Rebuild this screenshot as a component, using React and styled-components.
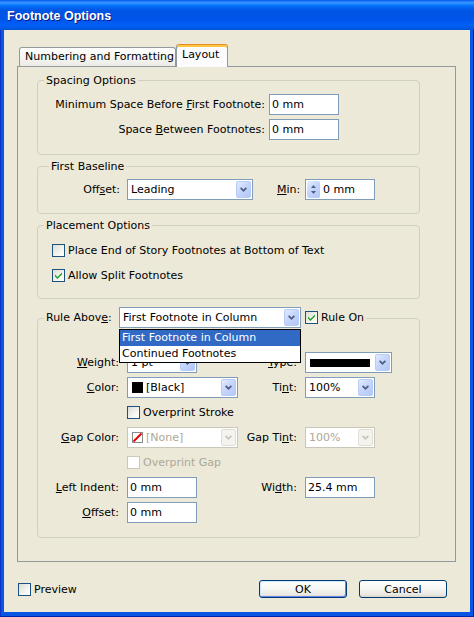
import React from "react";
import styled, { createGlobalStyle } from "styled-components";

const GlobalStyle = createGlobalStyle`
  html, body {
    margin: 0;
    padding: 0;
    background: #ECE9D8;
  }
  body {
    font-family: "DejaVu Sans", "Liberation Sans", sans-serif;
    font-size: 11px;
    line-height: 13px;
    color: #000;
  }
  * {
    box-sizing: border-box;
  }
`;

const Window = styled.div`
  width: 474px;
  height: 617px;
  display: flex;
  flex-direction: column;
  overflow: hidden;
  background: #0A52E0;
`;

const TitleBar = styled.div`
  flex: none;
  height: 30px;
  display: flex;
  align-items: center;
  padding: 1px 0 0 7px;
  background: linear-gradient(
    to bottom,
    #0058ee 0%,
    #3593ff 8%,
    #288eff 12%,
    #127dff 16%,
    #036ffc 20%,
    #0262ee 26%,
    #0057e5 34%,
    #0054e3 44%,
    #0055eb 66%,
    #005bf5 76%,
    #0260f5 86%,
    #0052d6 100%
  );
  color: #fff;
  font: bold 12.5px "Liberation Sans", Arial, sans-serif;
  text-shadow: 1px 1px 0 #0a1883;
`;

const Frame = styled.div`
  flex: 1;
  display: flex;
  padding: 0 3px 4px 3px;
  background: #0B55E4;
  border-left: 1px solid #0836C8;
  border-right: 1px solid #0026A8;
  border-bottom: 1px solid #0026A8;
`;

const Body = styled.div`
  flex: 1;
  background: #ECE9D8;
  padding: 14px 0 0 13px;
  display: flex;
  flex-direction: column;
`;

const TabStrip = styled.div`
  display: flex;
  align-items: flex-end;
  height: 23px;
  padding-left: 2px;
  margin-bottom: -1px;
  position: relative;
  z-index: 1;
`;

const Tab = styled.div`
  width: ${(p) => p.$w}px;
  height: ${(p) => (p.$active ? 23 : 19)}px;
  margin-bottom: ${(p) => (p.$active ? 0 : 1)}px;
  padding: ${(p) => (p.$active ? "3px 0 0 5px" : "2px 0 0 5px")};
  border: 1px solid #919B9C;
  border-bottom: none;
  border-top-color: ${(p) => (p.$active ? "#E68B2C" : "#919B9C")};
  border-radius: 3px 3px 0 0;
  background: ${(p) =>
    p.$active ? "#FCFCFE" : "linear-gradient(#FFFFFF, #F4F4F0 60%, #ECEBE6)"};
  box-shadow: ${(p) => (p.$active ? "inset 0 2px 0 #FFC73C" : "none")};
  white-space: nowrap;
  overflow: hidden;
`;

const Panel = styled.div`
  width: 439px;
  height: 496px;
  border: 1px solid #919B9C;
  background: #ECE9D8;
  padding: 13px 0 0 19px;
  display: flex;
  flex-direction: column;
`;

const Group = styled.div`
  width: 383px;
  height: ${(p) => p.$h}px;
  margin-top: ${(p) => p.$mt || 0}px;
  border: 1px solid #D0D0BF;
  border-radius: 4px;
  display: flex;
  flex-direction: column;
`;

const GroupTitle = styled.div`
  align-self: flex-start;
  display: flex;
  align-items: center;
  height: ${(p) => p.$h || 13}px;
  margin: -${(p) => p.$lift || 7}px 0 0 ${(p) => p.$indent || 6}px;
  padding: 0 2px;
  background: #ECE9D8;
  white-space: nowrap;
`;

const FormGrid = styled.div`
  display: grid;
  grid-template-columns: ${(p) => p.$cols};
  grid-auto-rows: 21px;
  row-gap: 4px;
  margin-top: ${(p) => p.$mt}px;
  align-items: center;
`;

const FieldLabel = styled.span`
  text-align: right;
  padding-right: ${(p) => p.$gap ?? 8}px;
  white-space: nowrap;
  color: ${(p) => (p.$disabled ? "#ACA899" : "inherit")};
`;

const Row = styled.div`
  display: flex;
  align-items: center;
  height: 21px;
  margin-top: ${(p) => p.$mt || 0}px;
`;

const CheckList = styled.div`
  display: flex;
  flex-direction: column;
  gap: 4px;
  margin-top: ${(p) => p.$mt}px;
  padding-left: 14px;
`;

const TextInput = styled.input`
  width: ${(p) => p.$w || 70}px;
  height: 21px;
  margin: 0;
  border: 1px solid #7F9DB9;
  border-radius: 0;
  background: #fff;
  padding: 0 0 0 2px;
  font: inherit;
  color: #000;
  outline: none;
`;

const SelectWrap = styled.div`
  position: relative;
  width: ${(p) => p.$w}px;
  flex: none;
`;

const SelectBox = styled.div`
  width: 100%;
  height: 21px;
  border: 1px solid ${(p) => (p.$disabled ? "#C9C7BA" : "#7F9DB9")};
  background: #fff;
  display: flex;
  align-items: center;
  padding-left: 3px;
  color: ${(p) => (p.$disabled ? "#ACA899" : "#000")};
`;

const SelectValue = styled.span`
  flex: 1;
  min-width: 0;
  display: flex;
  align-items: center;
  gap: 3px;
  white-space: nowrap;
  overflow: hidden;
`;

const DropButton = styled.span`
  flex: none;
  width: 15px;
  height: 17px;
  margin: 0 1px;
  border-radius: 2px;
  border: 1px solid ${(p) => (p.$disabled ? "#E2E0D6" : "#B9CCF6")};
  background: ${(p) =>
    p.$disabled
      ? "#F4F3EE"
      : "linear-gradient(135deg, #E4ECFE 0%, #C6D6FB 45%, #B2C7F7 100%)"};
  display: flex;
  align-items: center;
  justify-content: center;
`;

const DropList = styled.div`
  position: absolute;
  top: calc(100% + 1px);
  left: 0;
  width: 100%;
  border: 1px solid #000;
  background: #fff;
  z-index: 5;
`;

const DropItem = styled.div`
  height: 16px;
  line-height: 16px;
  padding-left: 2px;
  white-space: nowrap;
  background: ${(p) => (p.$selected ? "#316AC5" : "#fff")};
  color: ${(p) => (p.$selected ? "#fff" : "#000")};
`;

const SpinBox = styled.div`
  width: 70px;
  height: 21px;
  border: 1px solid #7F9DB9;
  background: #fff;
  display: flex;
  align-items: center;
`;

const SpinButtons = styled.span`
  width: 13px;
  height: 17px;
  margin: 0 3px 0 1px;
  border-radius: 2px;
  background: linear-gradient(135deg, #E4ECFE 0%, #C6D6FB 45%, #B2C7F7 100%);
  display: flex;
  flex-direction: column;
  align-items: center;
  justify-content: center;
  gap: 3px;
`;

const CheckRow = styled.label`
  display: flex;
  align-items: center;
  gap: 3px;
  height: 21px;
  white-space: nowrap;
  color: ${(p) => (p.$disabled ? "#ACA899" : "#000")};
  grid-column: ${(p) => p.$col || "auto"};
`;

const Box = styled.span`
  flex: none;
  width: 13px;
  height: 13px;
  border: 1px solid ${(p) => (p.$disabled ? "#CAC8BB" : "#1C5180")};
  background: ${(p) =>
    p.$disabled ? "#fff" : "linear-gradient(135deg, #DCDCD7 0%, #F4F4F0 60%, #FFFFFF 100%)"};
  display: flex;
  align-items: center;
  justify-content: center;
`;

const LineSwatch = styled.span`
  width: 60px;
  height: 8px;
  background: #000;
  margin-left: 1px;
`;

const ColorSwatch = styled.span`
  flex: none;
  width: 11px;
  height: 11px;
  background: #000;
  margin-left: 1px;
`;

const LegendLabel = styled.span`
  width: 73px;
  flex: none;
`;

const Footer = styled.div`
  width: 440px;
  height: 18px;
  margin-top: 18px;
  padding-left: 1px;
  display: flex;
  align-items: center;
`;

const ButtonRow = styled.div`
  margin-left: auto;
  margin-right: 10px;
  display: flex;
  gap: 12px;
`;

const Button = styled.button`
  width: 88px;
  height: 18px;
  margin: 0;
  padding: 0;
  border: 1px solid #003C74;
  border-radius: 3px;
  background: linear-gradient(#FFFFFF 0%, #F6F6F2 50%, #EAE8E1 85%, #D8D2C6 100%);
  box-shadow: ${(p) =>
    p.$default ? "inset 1px 1px 0 #CEE7FF, inset -1px -1px 0 #6982EE" : "none"};
  font: inherit;
  color: #000;
`;

const Chevron = ({ color = "#4D6185" }) => (
  <svg width="7" height="5" viewBox="0 0 7 5">
    <path d="M0.6 0.8 L3.5 3.7 L6.4 0.8" fill="none" stroke={color} strokeWidth="1.7" />
  </svg>
);

const SmallArrow = ({ up }) => (
  <svg width="5" height="3" viewBox="0 0 5 3">
    <path d={up ? "M0 3 L2.5 0 L5 3 Z" : "M0 0 L2.5 3 L5 0 Z"} fill="#4D6185" />
  </svg>
);

const CheckMark = () => (
  <svg width="7" height="7" viewBox="0 0 7 7">
    <path d="M0 2.6 L2.4 5 L7 0.4 L7 2.6 L2.4 7 L0 4.6 Z" fill="#21A121" />
  </svg>
);

const NoneSwatch = () => (
  <svg width="11" height="11" viewBox="0 0 11 11" style={{ flex: "none", marginLeft: 1 }}>
    <rect x="0.5" y="0.5" width="10" height="10" fill="#fff" stroke="#8A8A8A" />
    <path d="M1.5 9.5 L9.5 1.5" stroke="#E80000" strokeWidth="2" />
  </svg>
);

const Select = ({ w, disabled, children, list }) => (
  <SelectWrap $w={w}>
    <SelectBox $disabled={disabled}>
      <SelectValue>{children}</SelectValue>
      <DropButton $disabled={disabled}>
        <Chevron color={disabled ? "#C9C7BA" : "#4D6185"} />
      </DropButton>
    </SelectBox>
    {list && (
      <DropList>
        {list.map((item, i) => (
          <DropItem key={item} $selected={i === 0}>
            {item}
          </DropItem>
        ))}
      </DropList>
    )}
  </SelectWrap>
);

const Check = ({ checked, disabled, col, children }) => (
  <CheckRow $disabled={disabled} $col={col}>
    <Box $disabled={disabled}>{checked && <CheckMark />}</Box>
    {children}
  </CheckRow>
);

export default function App() {
  return (
    <Window>
      <GlobalStyle />
      <TitleBar>Footnote Options</TitleBar>
      <Frame>
        <Body>
          <TabStrip>
            <Tab $w={157}>Numbering and Formatting</Tab>
            <Tab $w={52} $active>
              Layout
            </Tab>
          </TabStrip>
          <Panel>
            <Group $h={75}>
              <GroupTitle>Spacing Options</GroupTitle>
              <FormGrid $cols="231px 70px" $mt={7}>
                <FieldLabel $gap={4}>
                  Minimum Space Before <u>F</u>irst Footnote:
                </FieldLabel>
                <TextInput readOnly value="0 mm" />
                <FieldLabel $gap={4}>
                  Space <u>B</u>etween Footnotes:
                </FieldLabel>
                <TextInput readOnly value="0 mm" />
              </FormGrid>
            </Group>

            <Group $h={48} $mt={11}>
              <GroupTitle $indent={11}>First Baseline</GroupTitle>
              <Row $mt={6}>
                <FieldLabel $gap={7} style={{ width: 89 }}>
                  Off<u>s</u>et:
                </FieldLabel>
                <Select w={126}>Leading</Select>
                <FieldLabel $gap={0} style={{ width: 28, marginLeft: 24, textAlign: "left" }}>
                  <u>M</u>in:
                </FieldLabel>
                <SpinBox>
                  <SpinButtons>
                    <SmallArrow up />
                    <SmallArrow />
                  </SpinButtons>
                  0 mm
                </SpinBox>
              </Row>
            </Group>

            <Group $h={74} $mt={11}>
              <GroupTitle>Placement Options</GroupTitle>
              <CheckList $mt={8}>
                <Check>Place End of Story Footnotes at Bottom of Text</Check>
                <Check checked>Allow Split Footnotes</Check>
              </CheckList>
            </Group>

            <Group $h={220} $mt={19}>
              <GroupTitle $h={21} $lift={12}>
                <LegendLabel>
                  Rule Abov<u>e</u>:
                </LegendLabel>
                <Select w={182} list={["First Footnote in Column", "Continued Footnotes"]}>
                  First Footnote in Column
                </Select>
                <span style={{ width: 4 }} />
                <Check checked>Rule On</Check>
              </GroupTitle>
              <FormGrid $cols="89px 118px 60px auto" $mt={24}>
                <FieldLabel>
                  <u>W</u>eight:
                </FieldLabel>
                <Select w={70}>1 pt</Select>
                <FieldLabel>
                  <u>T</u>ype:
                </FieldLabel>
                <Select w={87}>
                  <LineSwatch />
                </Select>

                <FieldLabel>
                  <u>C</u>olor:
                </FieldLabel>
                <Select w={111}>
                  <ColorSwatch />
                  [Black]
                </Select>
                <FieldLabel>
                  Ti<u>n</u>t:
                </FieldLabel>
                <Select w={70}>100%</Select>

                <span />
                <Check col="2 / 5">Overprint Stroke</Check>

                <FieldLabel>
                  <u>G</u>ap Color:
                </FieldLabel>
                <Select w={111} disabled>
                  <NoneSwatch />
                  [None]
                </Select>
                <FieldLabel>
                  Gap Ti<u>n</u>t:
                </FieldLabel>
                <Select w={70} disabled>
                  100%
                </Select>

                <span />
                <Check col="2 / 5" disabled>
                  Overprint Gap
                </Check>

                <FieldLabel>
                  <u>L</u>eft Indent:
                </FieldLabel>
                <TextInput readOnly value="0 mm" />
                <FieldLabel>
                  Wi<u>d</u>th:
                </FieldLabel>
                <TextInput readOnly value="25.4 mm" />

                <FieldLabel>
                  <u>O</u>ffset:
                </FieldLabel>
                <TextInput readOnly value="0 mm" />
              </FormGrid>
            </Group>
          </Panel>

          <Footer>
            <Check>Preview</Check>
            <ButtonRow>
              <Button $default>OK</Button>
              <Button>Cancel</Button>
            </ButtonRow>
          </Footer>
        </Body>
      </Frame>
    </Window>
  );
}
